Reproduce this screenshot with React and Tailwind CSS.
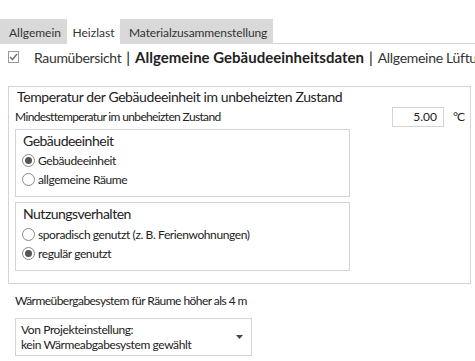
const FONT = { fontFamily: 'Lato, "Noto Sans", sans-serif' };

const Radio = ({ checked, label }) => (
  <div className="flex items-center h-[19px] text-[12px] tracking-[-0.4px] text-[#222]">
    <span className="w-[13px] h-[13px] ml-[6px] mr-[3px] rounded-full border border-[#8a8a8a] bg-white flex items-center justify-center">
      {checked && <span className="w-[7px] h-[7px] rounded-full bg-[#555]" />}
    </span>
    <span>{label}</span>
  </div>
);

const GroupBox = ({ title, children, className }) => (
  <div className={`border border-[#d4d4d4] ${className}`}>
    <div className="h-[20px] pl-[7px] pt-[2px] text-[14px] tracking-[-0.5px] leading-[18px] text-[#222]">{title}</div>
    {children}
  </div>
);

export default function App() {
  return (
    <div className="w-[475px] h-[361px] bg-white overflow-hidden" style={FONT}>
      {/* tabs */}
      <div className="flex pt-[19px]">
        <div className="flex w-[273px] h-[25px] bg-[#d9d9d9] text-[12px] text-[#333]">
          <div className="w-[67px] pl-[9px] pt-[5px]">Allgemein</div>
          <div className="w-[53px] bg-white pt-[5px] text-center">Heizlast</div>
          <div className="pl-[9px] pt-[5px] tracking-[-0.1px]">Materialzusammenstellung</div>
        </div>
        <div className="flex-1 h-[25px] border-b border-[#d4d4d4]" />
      </div>

      {/* breadcrumb */}
      <div className="flex items-center h-[25px] pt-[1px] text-[#333] whitespace-nowrap">
        <span className="ml-[8px] w-[12px] h-[12px] border border-[#9a9a9a] flex items-center justify-center">
          <svg width="9" height="8" viewBox="0 0 9 8">
            <path d="M1 4 L3.5 6.5 L8 1" fill="none" stroke="#777" strokeWidth="1.6" />
          </svg>
        </span>
        <span className="ml-[15px] text-[14px] tracking-[-0.35px]">Raumübersicht</span>
        <span className="mx-[5px] text-[15px] text-[#111]">|</span>
        <span className="text-[15px] font-bold text-[#222]">Allgemeine Gebäudeeinheitsdaten</span>
        <span className="mx-[5px] text-[15px] text-[#111]">|</span>
        <span className="text-[14px] tracking-[-0.3px]">Allgemeine Lüftung</span>
      </div>

      {/* main group */}
      <div className="mt-[17px] ml-[8px] w-[463px] h-[198px] border border-[#d4d4d4]">
        <div className="h-[20px] pl-[8px] pt-[1px] text-[14px] tracking-[-0.4px] leading-[18px] text-[#222]">
          Temperatur der Gebäudeeinheit im unbeheizten Zustand
        </div>
        <div className="flex items-center h-[20px]">
          <span className="pl-[6px] text-[12px] tracking-[-0.65px] text-[#222]">Mindesttemperatur im unbeheizten Zustand</span>
          <div className="ml-auto w-[52px] h-[20px] border border-[#d4d4d4] text-right pr-[6px] text-[12px] leading-[18px] text-[#222]">
            5.00
          </div>
          <span className="w-[26px] pl-[9px] text-[12px] text-[#222] tracking-[-1px]">°C</span>
        </div>
        <GroupBox title="Gebäudeeinheit" className="mt-[2px] ml-[6px] w-[335px] h-[68px]">
          <div className="pt-[1px]">
            <Radio checked label="Gebäudeeinheit" />
            <Radio label="allgemeine Räume" />
          </div>
        </GroupBox>
        <GroupBox title="Nutzungsverhalten" className="mt-[5px] ml-[6px] w-[335px] h-[69px]">
          <div className="pt-[2px]">
            <Radio label="sporadisch genutzt (z. B. Ferienwohnungen)" />
            <Radio checked label="regulär genutzt" />
          </div>
        </GroupBox>
      </div>

      <div className="mt-[8px] ml-[15px] h-[18px] text-[12px] tracking-[-0.55px] text-[#222]">
        Wärmeübergabesystem für Räume höher als 4 m
      </div>
      <div className="mt-[8px] ml-[15px] w-[237px] h-[38px] border border-[#d4d4d4] flex items-center pl-[5px] pr-[8px]">
        <div className="text-[12px] tracking-[-0.4px] leading-[15px] text-[#222]">
          <div>Von Projekteinstellung:</div>
          <div>kein Wärmeabgabesystem gewählt</div>
        </div>
        <svg className="ml-auto" width="7" height="4" viewBox="0 0 7 4">
          <path d="M0 0 H7 L3.5 4 Z" fill="#444" />
        </svg>
      </div>
    </div>
  );
}
